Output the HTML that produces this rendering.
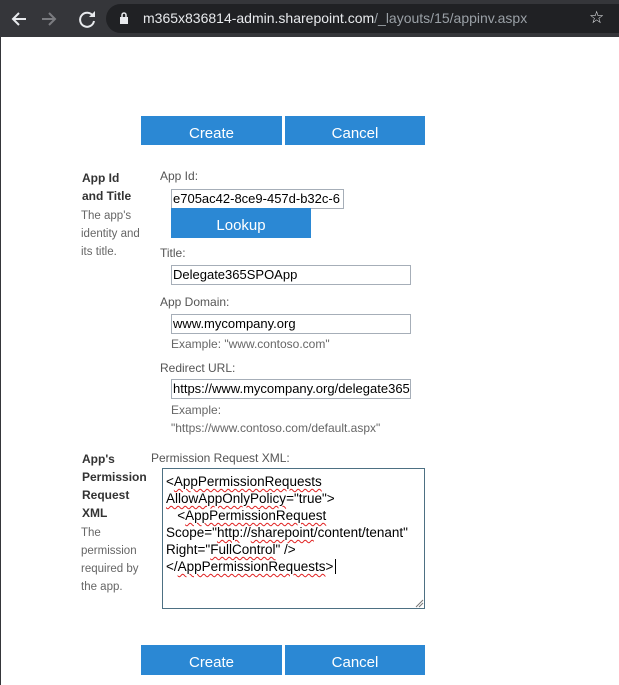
<!DOCTYPE html>
<html><head><meta charset="utf-8"><style>
*{margin:0;padding:0;box-sizing:border-box}
body{width:619px;height:685px;overflow:hidden;background:#fff;font-family:"Liberation Sans",sans-serif;position:relative}
.a{position:absolute;white-space:nowrap}
.bar{left:0;top:0;width:619px;height:37px;background:#35363a}
.pill{left:106px;top:4px;width:530px;height:29px;border-radius:15px;background:#202124}
.btn{position:absolute;background:#2b88d4;color:#fff;font-size:15px;text-align:center;line-height:29px;height:29px;padding-top:3px}
.lb{font-size:12px;font-weight:bold;color:#333}
.ds{font-size:11.5px;color:#666}
.ex{font-size:12px;color:#666}
.fl{font-size:12px;color:#555}
.in{position:absolute;border:1px solid #a6aeb8;height:20px;font-size:13px;color:#000;line-height:18px;padding-left:1px;overflow:hidden;white-space:nowrap}
.u{text-decoration:underline wavy #e02020;text-decoration-thickness:1px;text-underline-offset:2px}
</style></head><body>
<div class="a bar"></div>
<div class="a pill"></div>
<div class="a" style="left:0;top:37px;width:1px;height:648px;background:#35363a"></div>
<svg class="a" style="left:10px;top:9px" width="90" height="20" viewBox="0 0 90 20">
<path d="M16 10H4M9 4L3 10l6 6" stroke="#e8eaed" stroke-width="2" fill="none"/>
<path d="M32 10h12M39 4l6 6-6 6" stroke="#7b7c80" stroke-width="2" fill="none"/>
<path d="M83 7a7 7 0 1 0 1 5" stroke="#e8eaed" stroke-width="2" fill="none"/><path d="M85 2v6h-6z" fill="#e8eaed"/>
</svg>
<svg class="a" style="left:119px;top:12px" width="10" height="13"><rect x="1" y="5" width="8" height="7" fill="#e8eaed"/><path d="M3 5V3a2 2 0 0 1 4 0v2" stroke="#e8eaed" stroke-width="1.5" fill="none"/></svg>
<div class="a" style="left:143px;top:10px;font-size:14px;color:#e8eaed">m365x836814-admin.sharepoint.com<span style="color:#9aa0a6">/_layouts/15/appinv.aspx</span></div>
<div class="a" style="left:589px;top:8px;font-size:17px;color:#e8eaed">☆</div>

<div class="btn" style="left:141px;top:116px;width:141px">Create</div>
<div class="btn" style="left:285px;top:116px;width:140px">Cancel</div>

<div class="a lb" style="left:82px;top:171px">App Id</div>
<div class="a lb" style="left:82px;top:189px">and Title</div>
<div class="a ds" style="left:81px;top:210px">The app's</div>
<div class="a ds" style="left:81px;top:228px">identity and</div>
<div class="a ds" style="left:81px;top:246px">its title.</div>

<div class="a fl" style="left:160px;top:169px">App Id:</div>
<div class="in" style="left:171px;top:189px;width:173px">e705ac42-8ce9-457d-b32c-6</div>
<div class="btn" style="left:171px;top:208px;width:140px;height:30px;line-height:30px">Lookup</div>
<div class="a fl" style="left:160px;top:246px">Title:</div>
<div class="in" style="left:171px;top:265px;width:240px">Delegate365SPOApp</div>
<div class="a fl" style="left:160px;top:295px">App Domain:</div>
<div class="in" style="left:171px;top:314px;width:240px">www.mycompany.org</div>
<div class="a ex" style="left:171px;top:337px">Example: "www.contoso.com"</div>
<div class="a fl" style="left:160px;top:361px">Redirect URL:</div>
<div class="in" style="left:171px;top:379px;width:240px">https://www.mycompany.org/delegate365</div>
<div class="a ex" style="left:171px;top:403px">Example:</div>
<div class="a ex" style="left:171px;top:421px">"https://www.contoso.com/default.aspx"</div>

<div class="a lb" style="left:82px;top:452px">App's</div>
<div class="a lb" style="left:82px;top:470px">Permission</div>
<div class="a lb" style="left:82px;top:488px">Request</div>
<div class="a lb" style="left:82px;top:506px">XML</div>
<div class="a ds" style="left:81px;top:527px">The</div>
<div class="a ds" style="left:81px;top:545px">permission</div>
<div class="a ds" style="left:81px;top:563px">required by</div>
<div class="a ds" style="left:81px;top:581px">the app.</div>

<div class="a fl" style="left:151px;top:451px">Permission Request XML:</div>
<div class="a" style="left:162px;top:468px;width:263px;height:141px;border:1px solid #4d7083"></div>
<div class="a" style="left:166px;top:473px;font-size:13.5px;line-height:17px;color:#000">
&lt;<span class="u">AppPermissionRequests</span><br>
<span class="u">AllowAppOnlyPolicy</span>="true"&gt;<br>
&nbsp;&nbsp;&nbsp;&lt;<span class="u">AppPermissionRequest</span><br>
Scope="<span class="u">http</span>://<span class="u">sharepoint</span>/content/tenant"<br>
Right="<span class="u">FullControl</span>" /&gt;<br>
&lt;/<span class="u">AppPermissionRequests</span>&gt;<span style="border-left:1px solid #000;margin-left:2px"></span>
</div>
<svg class="a" style="left:414px;top:598px" width="10" height="10"><path d="M9 2L2 9M9 5L5 9" stroke="#777" stroke-width="1"/></svg>

<div class="btn" style="left:141px;top:645px;width:141px;height:30px;line-height:30px">Create</div>
<div class="btn" style="left:285px;top:645px;width:140px;height:30px;line-height:30px">Cancel</div>
</body></html>
